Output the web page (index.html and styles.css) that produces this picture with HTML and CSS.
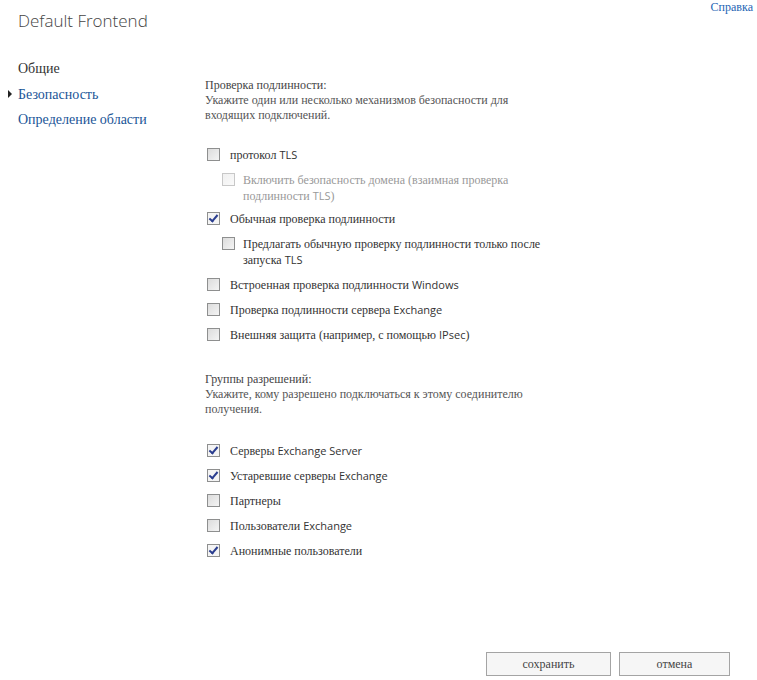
FILE: index.html
```html
<!DOCTYPE html>
<html lang="ru">
<head>
    <meta charset="UTF-8">
    <title>Default Frontend</title>
    <link rel="stylesheet" href="styles.css">
</head>
<body>
    <!-- Шапка -->
    <div class="header">
        <h1 class="title">Default Frontend</h1>
        <a class="help" href="#">Справка</a>
    </div>

    <div class="page">
        <!-- Навигация -->
        <ul class="nav">
            <li class="nav-item">Общие</li>
            <li class="nav-item active">Безопасность</li>
            <li class="nav-item link">Определение области</li>
        </ul>

        <!-- Содержимое -->
        <div class="content">
            <div class="section">
                <div class="caption">Проверка подлинности:</div>
                <div class="hint">Укажите один или несколько механизмов безопасности для входящих подключений.</div>
            </div>

            <div class="options">
                <label class="option"><span class="box"></span><span>протокол <span class="lat">TLS</span></span></label>
                <label class="option sub disabled"><span class="box"></span><span>Включить безопасность домена (взаимная проверка подлинности <span class="lat">TLS</span>)</span></label>
                <label class="option"><span class="box checked"></span><span>Обычная проверка подлинности</span></label>
                <label class="option sub"><span class="box"></span><span>Предлагать обычную проверку подлинности только после запуска <span class="lat">TLS</span></span></label>
                <label class="option"><span class="box"></span><span>Встроенная проверка подлинности <span class="lat">Windows</span></span></label>
                <label class="option"><span class="box"></span><span>Проверка подлинности сервера <span class="lat">Exchange</span></span></label>
                <label class="option"><span class="box"></span><span>Внешняя защита (например, с помощью <span class="lat">IPsec</span>)</span></label>
            </div>

            <div class="section second">
                <div class="caption">Группы разрешений:</div>
                <div class="hint">Укажите, кому разрешено подключаться к этому соединителю получения.</div>
            </div>

            <div class="options">
                <label class="option"><span class="box checked"></span><span>Серверы <span class="lat">Exchange Server</span></span></label>
                <label class="option"><span class="box checked"></span><span>Устаревшие серверы <span class="lat">Exchange</span></span></label>
                <label class="option"><span class="box"></span><span>Партнеры</span></label>
                <label class="option"><span class="box"></span><span>Пользователи <span class="lat">Exchange</span></span></label>
                <label class="option"><span class="box checked"></span><span>Анонимные пользователи</span></label>
            </div>
        </div>
    </div>

    <!-- Кнопки -->
    <div class="buttons">
        <button class="btn save">сохранить</button>
        <button class="btn">отмена</button>
    </div>
</body>
</html>
```

FILE: styles.css
```css
/* Базовые стили */
body {
    margin: 0;
    padding: 0;
    background: #fff;
    font-family: "Liberation Serif", "DejaVu Serif", serif;
    color: #333;
    width: 757px;
    height: 680px;
    position: relative;
    overflow: hidden;
}

.nav,
.content,
.help,
.btn {
    font-family: "Liberation Serif", "DejaVu Serif", serif;
}

.lat {
    font-family: "Open Sans", "DejaVu Sans", sans-serif;
    font-size: 11px;
    line-height: 1;
}

/* Шапка */
.header {
    display: flex;
    justify-content: space-between;
    align-items: flex-start;
    height: 56px;
}

.title {
    margin: 9px 0 0 18px;
    font-family: "Open Sans", "Lato", sans-serif;
    font-weight: 300;
    font-size: 17px;
    color: #444;
}

.help {
    margin: 0 4px 0 0;
    font-size: 12px;
    line-height: 14px;
    color: #1e64b4;
    text-decoration: none;
}

/* Основная часть */
.page {
    display: flex;
}

.nav {
    list-style: none;
    margin: 4px 0 0;
    padding: 0 0 0 18px;
    width: 205px;
    box-sizing: border-box;
}

.nav-item {
    position: relative;
    font-size: 14px;
    line-height: 17px;
    height: 25.5px;
    color: #333;
}

.nav-item.active,
.nav-item.link {
    color: #1a5597;
}

.nav-item.active::before {
    content: "";
    position: absolute;
    left: -10px;
    top: 4px;
    border-left: 4px solid #222;
    border-top: 4px solid transparent;
    border-bottom: 4px solid transparent;
}

.content {
    width: 345px;
    padding-top: 22px;
}

.section {
    font-size: 12px;
    line-height: 15px;
    margin-bottom: 24px;
    color: #444;
}

.section.second {
    margin-bottom: 26px;
}

.hint {
    color: #555;
}

.options {
    display: flex;
    flex-direction: column;
    gap: 9px;
    margin-bottom: 29px;
}

.option {
    display: flex;
    align-items: flex-start;
    gap: 10px;
    font-size: 12px;
    line-height: 16px;
    color: #333;
    padding-left: 2px;
}

.option.sub {
    padding-left: 17px;
    gap: 8px;
}

.option.disabled {
    color: #999;
    margin-bottom: -2px;
}

.box {
    flex: none;
    width: 11px;
    height: 11px;
    margin-top: 1px;
    border: 1px solid #8e8f8f;
    background: linear-gradient(135deg, #dcdcdc, #f4f4f4);
    position: relative;
}

.disabled .box {
    border-color: #c8c8c8;
    background: linear-gradient(135deg, #f0f0f0, #fafafa);
}

.box.checked {
    background: #f4f4f4;
}

.box.checked::after {
    content: "";
    position: absolute;
    left: 3px;
    top: 0;
    width: 3px;
    height: 7px;
    border-right: 2px solid #2a3d8f;
    border-bottom: 2px solid #2a3d8f;
    transform: rotate(40deg);
}

/* Кнопки */
.buttons {
    position: absolute;
    right: 27px;
    bottom: 4px;
    display: flex;
    gap: 8px;
}

.btn {
    height: 24px;
    padding: 0;
    background: #f6f6f6;
    border: 1px solid #a4a4a4;
    font-size: 12px;
    color: #444;
    width: 111px;
}

.btn.save {
    width: 125px;
}
```
